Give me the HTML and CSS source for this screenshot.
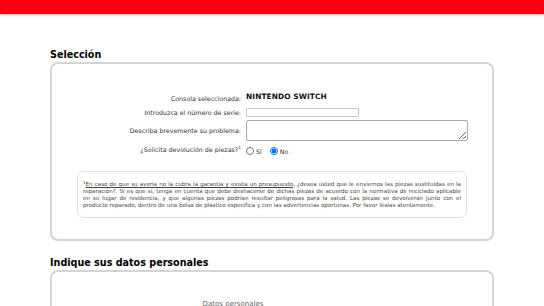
FILE: index.html
```html
<!DOCTYPE html>
<html lang="es">
<head>
    <meta charset="UTF-8">
    <title>Reparaciones - Selección</title>
    <link rel="stylesheet" href="styles.css">
</head>
<body>
    <div class="top-bar"></div>

    <div class="main">
        <h2 class="section-title">Selección</h2>
        <div class="box">
            <div class="form-grid">
                <label class="form-label">Consola seleccionada:</label>
                <div class="form-value console-name">NINTENDO SWITCH</div>

                <label class="form-label">Introduzca el número de serie:</label>
                <div class="form-value"><input class="input-serial" type="text"></div>

                <label class="form-label">Describa brevemente su problema:</label>
                <div class="form-value"><textarea class="input-problem"></textarea></div>

                <label class="form-label">¿Solicita devolución de piezas?<sup>1</sup></label>
                <div class="form-value radios">
                    <label class="radio"><input type="radio" name="piezas"> Sí</label>
                    <label class="radio"><input type="radio" name="piezas" checked> No</label>
                </div>
            </div>

            <div class="note">
                <p><sup>1</sup><u>En caso de que su avería no la cubra la garantía y exista un presupuesto</u>, ¿desea usted que le enviemos las piezas sustituidas en la reparación?. Si es que sí, tenga en cuenta que debe deshacerse de dichas piezas de acuerdo con la normativa de reciclado aplicable en su lugar de residencia, y que algunas piezas podrían resultar peligrosas para la salud. Las piezas se devolverán junto con el producto reparado, dentro de una bolsa de plástico específica y con las advertencias oportunas. Por favor léalas atentamente.</p>
            </div>
        </div>

        <h2 class="section-title second">Indique sus datos personales</h2>
        <div class="box box-personal">
            <div class="box-caption">Datos personales</div>
        </div>
    </div>
</body>
</html>
```

FILE: styles.css
```css
*{
    margin: 0;
    padding: 0;
    box-sizing: border-box;
}

body{
    background-color: white;
    font-family: "DejaVu Sans", Verdana, sans-serif;
    color: #222;
}

.top-bar{
    height: 14px;
    background-color: #fe0010;
    box-shadow: 0 1px 2px rgba(230, 0, 0, 0.35);
}

.main{
    width: 444px;
    margin-left: 50px;
    padding-top: 34px;
}

.section-title{
    font-size: 9.6px;
    font-weight: bold;
    color: black;
    line-height: 14px;
}

.section-title.second{
    margin-top: 15px;
}

.box{
    border: 2px solid #d4d4d4;
    border-radius: 8px;
    padding: 28px 25px 21px 25px;
}

.box-personal{
    padding-top: 28px;
    min-height: 60px;
}

.form-grid{
    display: grid;
    grid-template-columns: 164px 1fr;
    column-gap: 5px;
    row-gap: 3px;
    align-items: center;
}

.form-label{
    text-align: right;
    font-size: 6.3px;
    color: #333;
    white-space: nowrap;
}

.form-label sup{
    font-size: 4.5px;
    line-height: 0;
}

.console-name{
    font-size: 7.4px;
    font-weight: bold;
    color: #111;
    letter-spacing: 0.1px;
    margin-bottom: 4px;
}

.input-serial{
    width: 113px;
    height: 9px;
    border: 1px solid #c8c8c8;
    border-radius: 1px;
    display: block;
}

.input-problem{
    width: 222px;
    height: 21px;
    border: 1px solid #a9a9a9;
    border-radius: 2px;
    display: block;
    resize: vertical;
}

.radios{
    display: flex;
    gap: 8px;
    font-size: 6.3px;
    color: #333;
    padding-top: 3px;
}

.radio{
    display: flex;
    align-items: center;
    gap: 2px;
}

.radio input{
    width: 8px;
    height: 8px;
    margin: 0;
}

.note{
    margin-top: 16px;
    border: 1px solid #e2e2e2;
    border-radius: 6px;
    padding: 9px 5px 8px 5px;
}

.note p{
    font-size: 5.55px;
    line-height: 7px;
    text-align: justify;
    color: #444;
}

.note sup{
    font-size: 4px;
    line-height: 0;
    vertical-align: 2px;
}

.box-caption{
    text-align: center;
    font-size: 7px;
    color: #666;
    margin-right: 78px;
}
```
